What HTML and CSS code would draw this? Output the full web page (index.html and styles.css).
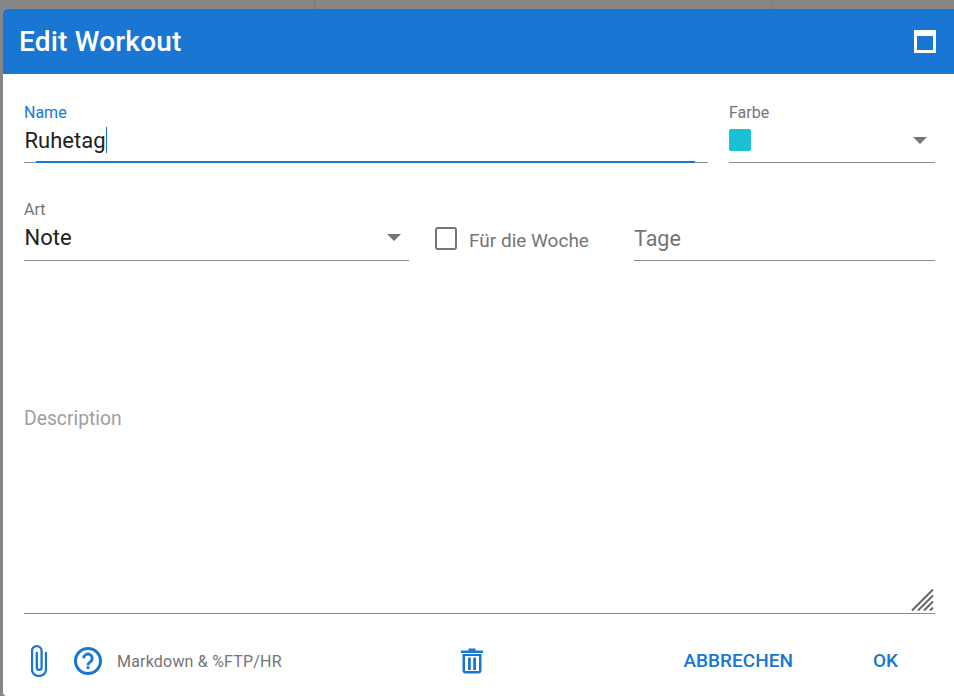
FILE: index.html
```html
<!DOCTYPE html>
<html lang="de">
<head>
<meta charset="utf-8">
<title>Edit Workout</title>
<link rel="stylesheet" href="styles.css">
</head>
<body>
<div class="backdrop">
  <div class="bg-lines"><i></i><i></i></div>
  <section class="dialog">
    <header class="titlebar">
      <h1>Edit Workout</h1>
      <svg class="maximize" width="24" height="24" viewBox="0 0 24 24"><path fill="#fff" fill-rule="evenodd" d="M1 0h22v23H1zM4 6v14h16V6z"/></svg>
    </header>
    <div class="content">
      <div class="row row-one">
        <div class="field field-name">
          <label class="label label-active">Name</label>
          <div class="value"><span>Ruhetag</span><span class="caret"></span></div>
          <div class="focus-line"></div>
        </div>
        <div class="field field-color">
          <label class="label">Farbe</label>
          <div class="value select-value"><span class="swatch"></span><span class="arrow"></span></div>
        </div>
      </div>
      <div class="row row-two">
        <div class="field field-type">
          <label class="label label-art">Art</label>
          <div class="value select-value"><span>Note</span><span class="arrow"></span></div>
        </div>
        <div class="check">
          <span class="box"></span>
          <span class="check-label">Für die Woche</span>
        </div>
        <div class="field field-days">
          <div class="placeholder-days">Tage</div>
        </div>
      </div>
      <div class="field field-desc">
        <div class="placeholder-desc">Description</div>
        <svg class="grip" width="24" height="24" viewBox="0 0 24 24"><path stroke="#666" stroke-width="2" fill="none" d="M1 22.500 22 1.500M7 22.500 22 7.500M13 22.500 22 13.500M19 22.500 22 19.500"/></svg>
      </div>
    </div>
    <footer class="footer">
      <div class="foot-left">
        <svg class="clip" width="16" height="32" viewBox="0 0 16 32"><path fill="none" stroke="#1976d2" stroke-width="2.300" stroke-linecap="round" d="M15 8v16.500a7 6.500 0 0 1-14 0V6a4.800 4.800 0 0 1 9.600 0V22.500a2.400 2.400 0 0 1-4.800 0V8"/></svg>
        <svg class="help" width="30" height="30" viewBox="0 0 30 30"><circle cx="15" cy="15" r="12.500" fill="none" stroke="#1976d2" stroke-width="3"/><path fill="none" stroke="#1976d2" stroke-width="2.800" d="M10.800 12.300a4.200 4.200 0 1 1 6.700 3.300c-1.500 1.100-2.500 1.800-2.500 3.600"/><path fill="#1976d2" d="M13.600 20.200h2.800v2.800h-2.800z"/></svg>
        <span class="hint">Markdown &amp; %FTP/HR</span>
      </div>
      <svg class="trash" width="24" height="28" viewBox="0 0 24 28"><path fill="#1976d2" fill-rule="evenodd" d="M8.500 1.500h7v2H23V6H1V3.500h7.500zM2.500 7h19v17a3 3 0 0 1-2.500 2.500H5A3 3 0 0 1 2.500 24zM5 9v15h14V9zM8 10.500h2.800V23H8zM13.200 10.500H16V23h-2.800z"/></svg>
      <div class="foot-right">
        <span class="btn btn-cancel">ABBRECHEN</span>
        <span class="btn btn-ok">OK</span>
      </div>
    </footer>
  </section>
</div>
</body>
</html>
```
FILE: styles.css
```css
* { box-sizing: border-box; }
html, body { margin: 0; height: 100%; }
body { font-family: Roboto, "Liberation Sans", sans-serif; overflow: hidden; }
.backdrop {
  position: relative;
  width: 954px;
  height: 696px;
  background: #868686;
  padding: 9px 0 0 3px;
}
.bg-lines i {
  position: absolute;
  top: 0;
  width: 1px;
  height: 9px;
  background: #7c7c7c;
}
.bg-lines i:first-child { left: 314px; }
.bg-lines i:last-child { left: 771px; }
.dialog {
  position: relative;
  width: 951px;
  height: 687px;
  background: #fff;
  border-radius: 4px 0 0 4px;
  overflow: hidden;
  display: flex;
  flex-direction: column;
}
.titlebar {
  height: 65px;
  flex: none;
  background: #1976d2;
  color: #fff;
  display: flex;
  align-items: center;
  justify-content: space-between;
  padding: 0 17px 0 16px;
}
.titlebar h1 {
  margin: 0;
  font-size: 28px;
  font-weight: 500;
  letter-spacing: 0.200px;
}
.maximize { display: block; margin-top: 1px; }
.content { padding: 29px 19px 0 21px; flex: none; }
.row { display: flex; }
.row-one { justify-content: space-between; height: 60px; }
.row-two { margin-top: 36px; height: 62px; }
.field { position: relative; border-bottom: 1px solid #8c8c8c; }
.label {
  display: block;
  font-size: 16px;
  line-height: 20px;
  color: #757575;
}
.label-active { color: #1976d2; }
.label-art { padding-top: 1px; }
.value {
  display: flex;
  align-items: center;
  height: 34px;
  padding-left: 0.500px;
  font-size: 22px;
  color: #212121;
}
.select-value { justify-content: space-between; }
.caret {
  width: 1px;
  height: 26px;
  background: #1976d2;
}
.field-name { width: 684px; }
.focus-line {
  position: absolute;
  left: 12px;
  right: 13px;
  bottom: -1px;
  height: 2px;
  background: #1976d2;
}
.field-color { width: 206px; }
.swatch {
  width: 22px;
  height: 22px;
  border-radius: 2px;
  background: #17c0d2;
  margin-left: -0.500px;
}
.arrow {
  width: 0;
  height: 0;
  border-left: 7.500px solid transparent;
  border-right: 7.500px solid transparent;
  border-top: 7.500px solid #757575;
  margin-right: 8px;
}
.field-type { width: 385px; }
.check {
  width: 225px;
  padding-left: 26px;
  display: flex;
  align-items: center;
  gap: 12px;
  padding-top: 17px;
}
.box {
  width: 22px;
  height: 23px;
  border: 2.500px solid #757575;
  border-radius: 3px;
  flex: none;
}
.check-label { font-size: 19px; color: #757575; padding-top: 3px; }
.field-days { flex: 1; }
.placeholder-days {
  font-size: 21.500px;
  color: #757575;
  padding-top: 27px;
}
.field-desc { height: 353px; }
.placeholder-desc {
  padding-top: 147px;
  font-size: 19.300px;
  line-height: 22px;
  color: #9e9e9e;
}
.grip { position: absolute; right: 0; bottom: 1px; display: block; }
.footer {
  flex: 1;
  display: flex;
  align-items: center;
  padding: 12px 0 0 28px;
}
.foot-left { display: flex; align-items: center; width: 429px; }
.clip { flex: none; }
.help { flex: none; margin: 0 14px 0 26px; }
.hint { font-size: 16px; color: #757575; letter-spacing: 0.200px; }
.trash { flex: none; }
.foot-right { display: flex; margin-left: auto; margin-top: -1px; }
.btn {
  font-size: 19px;
  font-weight: 500;
  color: #1976d2;
}
.btn-cancel { margin-right: 80px; }
.btn-ok { margin-right: 56px; }
```
